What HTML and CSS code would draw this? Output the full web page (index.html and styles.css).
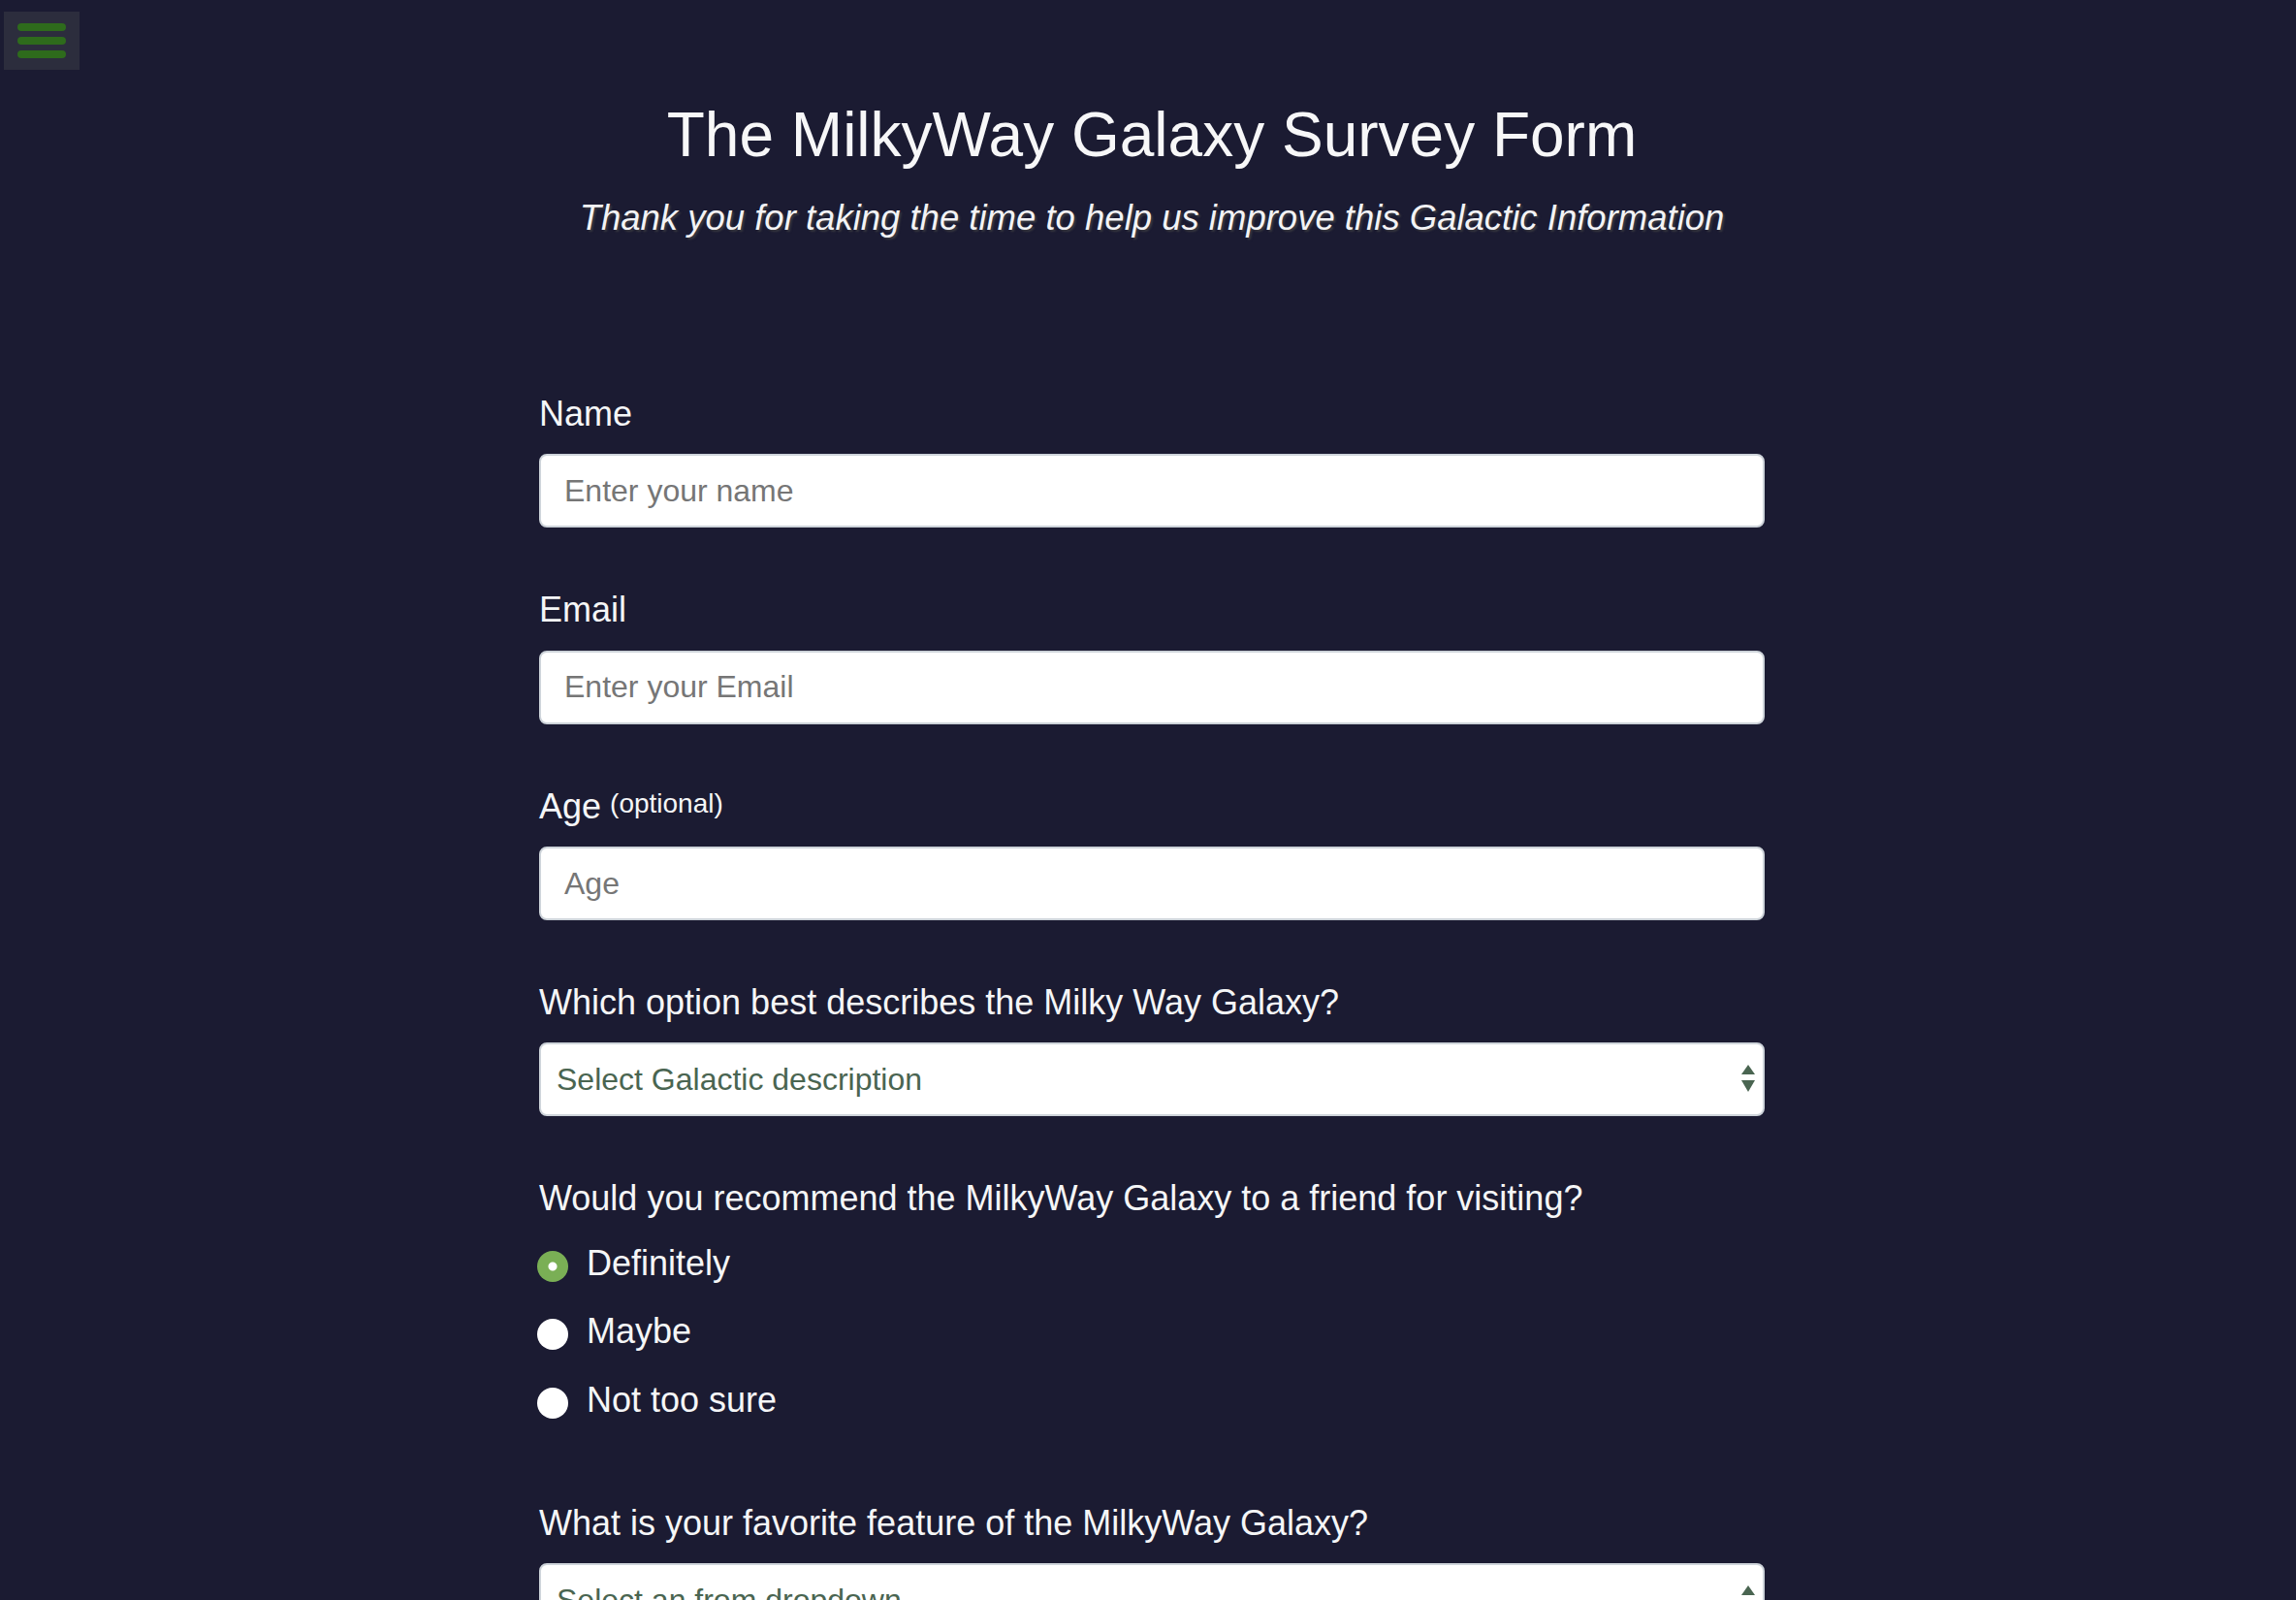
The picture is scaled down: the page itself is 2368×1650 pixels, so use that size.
FILE: index.html
```html
<!DOCTYPE html>
<html lang="en">
<head>
<meta charset="utf-8">
<title>The MilkyWay Galaxy Survey Form</title>
<link rel="stylesheet" href="styles.css">
</head>
<body>
<button class="menu-btn" aria-label="Menu">
  <span class="menu-bar"></span>
  <span class="menu-bar"></span>
  <span class="menu-bar"></span>
</button>
<div class="container">
  <header class="header">
    <h1 class="title">The MilkyWay Galaxy Survey Form</h1>
    <p class="description">Thank you for taking the time to help us improve this Galactic Information</p>
  </header>
  <form class="survey-form">
    <div class="form-group">
      <label class="field-label" for="name">Name</label>
      <input class="form-control" id="name" type="text" placeholder="Enter your name">
    </div>
    <div class="form-group">
      <label class="field-label" for="email">Email</label>
      <input class="form-control" id="email" type="email" placeholder="Enter your Email">
    </div>
    <div class="form-group">
      <label class="field-label" for="age">Age<span class="clue">(optional)</span></label>
      <input class="form-control" id="age" type="number" placeholder="Age">
    </div>
    <div class="form-group">
      <label class="field-label" for="desc">Which option best describes the Milky Way Galaxy?</label>
      <div class="select-wrap">
        <select class="form-control select-control" id="desc">
          <option>Select Galactic description</option>
          <option>Barred spiral galaxy</option>
          <option>Elliptical galaxy</option>
        </select>
        <svg class="select-arrows" width="14" height="28" viewBox="0 0 14 28"><path d="M7 0 L14 10 L0 10 Z" fill="#4a6551"/><path d="M0 16 L14 16 L7 28 Z" fill="#4a6551"/></svg>
      </div>
    </div>
    <div class="form-group">
      <p class="field-label">Would you recommend the MilkyWay Galaxy to a friend for visiting?</p>
      <div class="radio-list">
        <label class="radio-row"><input class="radio" type="radio" name="rec" checked>Definitely</label>
        <label class="radio-row"><input class="radio" type="radio" name="rec">Maybe</label>
        <label class="radio-row"><input class="radio" type="radio" name="rec">Not too sure</label>
      </div>
    </div>
    <div class="form-group">
      <label class="field-label" for="feature">What is your favorite feature of the MilkyWay Galaxy?</label>
      <div class="select-wrap">
        <select class="form-control select-control" id="feature">
          <option>Select an from dropdown</option>
          <option>Stars</option>
          <option>Planets</option>
        </select>
        <svg class="select-arrows" width="14" height="28" viewBox="0 0 14 28"><path d="M7 0 L14 10 L0 10 Z" fill="#4a6551"/><path d="M0 16 L14 16 L7 28 Z" fill="#4a6551"/></svg>
      </div>
    </div>
    <div class="form-group">
      <label class="field-label" for="comments">Any comments or suggestions?</label>
      <textarea class="form-control textarea" id="comments" placeholder="Enter your comment here..."></textarea>
    </div>
  </form>
</div>
</body>
</html>
```

FILE: styles.css
```css
html {
  scrollbar-width: none;
  background: #1b1b32;
}
html::-webkit-scrollbar,
body::-webkit-scrollbar {
  display: none;
}
body {
  margin: 0;
  padding: 0 0 0 8px;
  background: #1b1b32;
  color: #f5f6f7;
  font-family: "Liberation Sans", Arial, Helvetica, sans-serif;
  font-size: 32px;
  line-height: 1.4;
}
.menu-btn {
  position: fixed;
  left: 4px;
  top: 12px;
  width: 78px;
  height: 60px;
  padding: 12px 14px;
  border: none;
  background: #2c2d3d;
  display: flex;
  flex-direction: column;
  justify-content: space-between;
  box-sizing: border-box;
}
.menu-bar {
  display: block;
  width: 50px;
  height: 8px;
  border-radius: 4px;
  background: #2e6b1c;
}
.container {
  width: 1264px;
  margin: 0 auto;
}
.header {
  padding-top: 101px;
  text-align: center;
}
.title {
  margin: 0 0 21px;
  font-size: 64px;
  font-weight: 400;
  line-height: 1.2;
  color: #f7f7f8;
}
.description {
  margin: 0;
  font-size: 36.5px;
  line-height: 1.4;
  font-style: italic;
  font-weight: 300;
  color: #f3f3f5;
  text-shadow: 2px 2px 2px rgba(68, 68, 68, 0.7);
}
.survey-form {
  padding-top: 144px;
}
.form-group {
  padding: 8px 0;
  margin-bottom: 44px;
}
.field-label {
  display: flex;
  align-items: center;
  gap: 9px;
  margin: 0 0 16px;
  font-size: 36px;
  line-height: 1.4;
  color: #f5f6f7;
}
.clue {
  font-size: 28px;
  margin-bottom: 6px;
}
.form-control {
  display: block;
  width: 100%;
  height: 76px;
  box-sizing: border-box;
  margin: 0;
  padding: 12px 24px;
  font-family: inherit;
  font-size: 32px;
  line-height: 1.4;
  color: #495057;
  background: #fff;
  border: 2px solid #ced4da;
  border-radius: 8px;
  outline: none;
}
.form-control::placeholder {
  color: #767676;
}
.select-wrap {
  position: relative;
}
.select-control {
  appearance: none;
  -webkit-appearance: none;
  padding: 0 16px;
  color: #4a6551;
}
.select-arrows {
  position: absolute;
  right: 10px;
  top: 23px;
}
.radio-list {
  display: flex;
  flex-direction: column;
  gap: 20px;
  padding-bottom: 17px;
}
.radio-row {
  display: flex;
  align-items: center;
  font-size: 36px;
  line-height: 1.4;
  color: #f5f6f7;
}
.radio {
  appearance: none;
  -webkit-appearance: none;
  width: 32px;
  height: 32px;
  margin: 6px 19px 0 -2px;
  border-radius: 50%;
  background: #fff;
  flex: none;
}
.radio:checked {
  background: radial-gradient(circle, #fff 0 4px, #7aaf55 5px);
}
.textarea {
  height: 240px;
  resize: vertical;
}
```
